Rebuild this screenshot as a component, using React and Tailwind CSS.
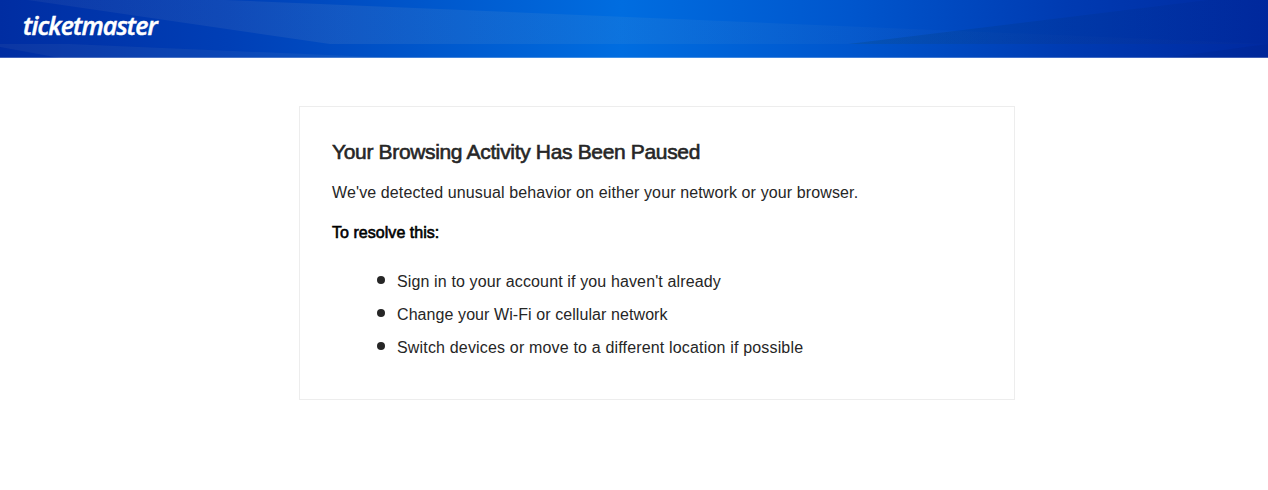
const steps = [
    {text: "Sign in to your account if you haven't already", tracking: 'tracking-[0.13px]'},
    {text: "Change your Wi-Fi or cellular network", tracking: 'tracking-[0.08px]'},
    {text: "Switch devices or move to a different location if possible", tracking: 'tracking-[0.17px]'},
]

const HeaderPattern = () =>{
    return(
        <svg className="absolute inset-0 h-full w-full" viewBox="0 0 1268 58" preserveAspectRatio="none" aria-hidden="true">
            <defs>
                <linearGradient id="beam" x1="0" x2="1">
                    <stop offset="0" stopColor="#f5e6c8" stopOpacity="0.05"/>
                    <stop offset="0.25" stopColor="#f5e6c8" stopOpacity="0.075"/>
                    <stop offset="0.5" stopColor="#f5e6b4" stopOpacity="0.05"/>
                    <stop offset="0.8" stopColor="#f5e6b4" stopOpacity="0.01"/>
                </linearGradient>
                <linearGradient id="shade" x1="0" x2="1">
                    <stop offset="0" stopColor="#003c64" stopOpacity="0.22"/>
                    <stop offset="1" stopColor="#001a66" stopOpacity="0.06"/>
                </linearGradient>
            </defs>
            <path d="M28 0H225L1268 44H330Z" fill="url(#beam)"/>
            <path d="M848 44L1208 0H1268V44Z" fill="url(#shade)"/>
            <path d="M0 44H70L400 58H60L0 47Z" fill="#f5e6c8" fillOpacity="0.05"/>
            <path d="M1165 58L1268 44V58Z" fill="#001a66" fillOpacity="0.1"/>
        </svg>
    );
}

const Header = () =>{
    return(
        <header className="relative h-[58px] bg-[linear-gradient(90deg,#002da2_0%,#003fb6_18%,#0056cb_33%,#006de0_49%,#0056cd_67%,#003bb2_84%,#0029a0_100%)]">
            <HeaderPattern/>
            <div className="relative flex h-full items-start border-b border-white/25 pl-[23px] pt-[8px]">
                <span className="font-['Open_Sans','Noto_Sans',sans-serif] text-[25px] leading-[34px] font-semibold italic tracking-[-0.85px] text-white [-webkit-text-stroke:0.5px_#fff]">ticketmaster</span>
            </div>
        </header>
    );
}

const App = () =>{
    return(
        <div className="min-h-screen bg-white font-['Liberation_Sans',Arial,sans-serif] text-[#262626]">
            <Header/>
            <main className="ml-[299px] mt-12 h-[294px] w-[716px] border border-[#ededed] px-8 pt-[31px]">
                <h1 className="text-[21px] leading-7 tracking-[-0.34px] [-webkit-text-stroke:0.6px_#262626]">Your Browsing Activity Has Been Paused</h1>
                <p className="mt-[15px] text-[16px] leading-6 tracking-[0.12px]">We've detected unusual behavior on either your network or your browser.</p>
                <p className="mt-4 text-[16px] leading-6 tracking-[0.04px] text-black [-webkit-text-stroke:0.6px_#000]">To resolve this:</p>
                <ul className="mt-5 pl-[45px]">
                    {steps.map(step =>
                    <li key={step.text} className="flex h-[33px] items-center">
                        <span className="mr-3 -mt-[3px] size-[8px] rounded-full bg-[#262626]"></span>
                        <span className={`text-[16px] leading-6 ${step.tracking}`}>{step.text}</span>
                    </li>)}
                </ul>
            </main>
        </div>
    );
}

export default App;
